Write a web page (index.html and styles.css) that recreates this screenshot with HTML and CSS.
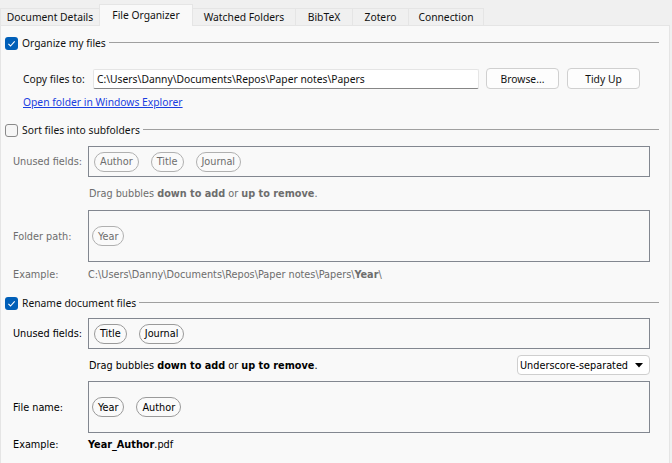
FILE: index.html
```html
<!DOCTYPE html>
<html>
<head>
<meta charset="utf-8">
<link rel="stylesheet" href="styles.css">
</head>
<body>
<div class="tabs">
  <div class="tab t1">Document Details</div>
  <div class="tab t2 active">File Organizer</div>
  <div class="tab t3">Watched Folders</div>
  <div class="tab t4">BibTeX</div>
  <div class="tab t5">Zotero</div>
  <div class="tab t6">Connection</div>
</div>
<div class="panel">
  <div class="group-head">
    <span class="cb checked"><svg width="13" height="13" viewBox="0 0 13 13"><path d="M3.4 6.9 L5.5 9 L9.7 4.3" fill="none" stroke="#fff" stroke-width="1.1"/></svg></span>
    <span class="gh-text">Organize my files</span>
    <span class="rule"></span>
  </div>
  <div class="copy-row">
    <span class="copy-label">Copy files to:</span>
    <div class="input">C:\Users\Danny\Documents\Repos\Paper notes\Papers</div>
    <div class="btn browse">Browse...</div>
    <div class="btn tidy">Tidy Up</div>
  </div>
  <div class="link-row"><a class="link" href="#">Open folder in Windows Explorer</a></div>

  <div class="group-head sort-head">
    <span class="cb"></span>
    <span class="gh-text">Sort files into subfolders</span>
    <span class="rule"></span>
  </div>
  <div class="field-row disabled first">
    <span class="flabel">Unused fields:</span>
    <div class="box short pad5">
      <span class="bubble">Author</span>
      <span class="bubble">Title</span>
      <span class="bubble">Journal</span>
    </div>
  </div>
  <div class="hint disabled">Drag bubbles <b>down to add</b> or <b>up to remove</b>.</div>
  <div class="field-row disabled tall-row">
    <span class="flabel">Folder path:</span>
    <div class="box tall pad3">
      <span class="bubble">Year</span>
    </div>
  </div>
  <div class="example disabled"><span class="flabel">Example:</span><span>C:\Users\Danny\Documents\Repos\Paper notes\Papers\<b>Year</b>\</span></div>

  <div class="group-head rename-head">
    <span class="cb checked"><svg width="13" height="13" viewBox="0 0 13 13"><path d="M3.4 6.9 L5.5 9 L9.7 4.3" fill="none" stroke="#fff" stroke-width="1.1"/></svg></span>
    <span class="gh-text">Rename document files</span>
    <span class="rule"></span>
  </div>
  <div class="field-row rename-unused">
    <span class="flabel">Unused fields:</span>
    <div class="box short pad5">
      <span class="bubble">Title</span>
      <span class="bubble">Journal</span>
    </div>
  </div>
  <div class="drag-row">
    <div class="hint-inline">Drag bubbles <b>down to add</b> or <b>up to remove</b>.</div>
    <div class="combo"><span>Underscore-separated</span><svg width="8" height="5" viewBox="0 0 8 5"><polygon points="0,0 8,0 4,4.5" fill="#000"/></svg></div>
  </div>
  <div class="field-row file-row">
    <span class="flabel">File name:</span>
    <div class="box tall pad3">
      <span class="bubble">Year</span>
      <span class="bubble">Author</span>
    </div>
  </div>
  <div class="example file-example"><span class="flabel">Example:</span><span><b>Year_Author</b>.pdf</span></div>
</div>
</body>
</html>
```

FILE: styles.css
```css
html, body {
  margin: 0;
  padding: 0;
}
body {
  width: 672px;
  height: 463px;
  overflow: hidden;
  background: #f0f0f0;
  font-family: "Noto Sans", "Open Sans", sans-serif;
  font-size: 10.3px;
  color: #000;
}
.tabs {
  display: flex;
  align-items: flex-end;
  height: 25px;
  box-sizing: border-box;
  padding-top: 5px;
  position: relative;
  z-index: 2;
}
.tab {
  height: 17px;
  box-sizing: border-box;
  border: 1px solid #e5e5e5;
  border-bottom: none;
  margin-left: -1px;
  display: flex;
  align-items: center;
  justify-content: center;
  background: #f0f0f0;
  color: #111;
}
.tab.t1 { width: 100px; margin-left: 0; }
.tab.t2 { width: 94px; }
.tab.t3 { width: 104px; }
.tab.t4 { width: 58px; }
.tab.t5 { width: 57px; }
.tab.t6 { width: 76px; }
.tab.active {
  height: 22px;
  margin-bottom: -1px;
  background: #f9f9f9;
  padding-bottom: 2px;
}
.panel {
  width: 670px;
  height: 438px;
  box-sizing: border-box;
  background: #f9f9f9;
  border: 1px solid #e5e5e5;
  border-bottom: none;
  padding-top: 10px;
}
.group-head {
  display: flex;
  align-items: center;
  height: 14px;
  margin-left: 4px;
}
.cb {
  width: 13px;
  height: 13px;
  box-sizing: border-box;
  border: 1px solid #8a8a8a;
  border-radius: 3px;
  background: #f6f6f6;
  flex: none;
  display: flex;
}
.cb.checked {
  border: none;
  background: #005fb8;
}
.gh-text {
  margin-left: 4px;
  color: #111;
}
.rule {
  flex: 1;
  height: 1px;
  background: #a0a0a0;
  margin-left: 3px;
  margin-right: 10px;
  margin-top: -1px;
}
.copy-row {
  display: flex;
  align-items: center;
  margin-top: 18px;
  height: 21px;
}
.copy-label {
  margin-left: 22px;
  width: 70px;
  color: #111;
}
.input {
  width: 386px;
  height: 20px;
  box-sizing: border-box;
  background: #fff;
  border: 1px solid #e5e5e5;
  border-bottom: 1px solid #868686;
  border-radius: 2px;
  padding-left: 3px;
  display: flex;
  align-items: center;
  color: #111;
}
.btn {
  width: 73px;
  height: 21px;
  box-sizing: border-box;
  border: 1px solid #d0d0d0;
  border-radius: 4px;
  background: #fdfdfd;
  display: flex;
  align-items: center;
  justify-content: center;
  color: #111;
}
.browse { margin-left: 7px; }
.tidy { margin-left: 8px; }
.link-row {
  margin-top: 6px;
  margin-left: 22px;
  height: 14px;
  line-height: 14px;
}
.link {
  color: #1a3ee0;
  text-decoration: underline;
}
.sort-head { margin-top: 14px; }
.field-row {
  display: flex;
  align-items: center;
  font-family: "DejaVu Sans Condensed", "DejaVu Sans", sans-serif;
  font-size: 10.8px;
}
.field-row.first { margin-top: 9px; }
.tall-row { margin-top: 9px; }
.flabel {
  margin-left: 12px;
  width: 75px;
  flex: none;
}
.box {
  width: 562px;
  box-sizing: border-box;
  border: 1px solid #828790;
  display: flex;
  align-items: center;
  gap: 12px;
}
.box.short { height: 31px; }
.box.tall { height: 52px; }
.pad5 { padding-left: 5px; }
.pad3 { padding-left: 3px; }
.bubble {
  height: 20px;
  box-sizing: border-box;
  border: 1px solid #9a9a9a;
  border-radius: 10px;
  padding: 0 5px;
  display: flex;
  align-items: center;
  background: #fafafa;
}
.disabled { color: #6d6d6d; }
.disabled .bubble { border-color: #b0b0b0; }
.hint {
  margin-top: 10px;
  padding-left: 88px;
  height: 14px;
  line-height: 14px;
  font-family: "DejaVu Sans Condensed", "DejaVu Sans", sans-serif;
  font-size: 10.8px;
}
.example {
  display: flex;
  margin-top: 6px;
  height: 14px;
  line-height: 14px;
  font-family: "DejaVu Sans Condensed", "DejaVu Sans", sans-serif;
  font-size: 10.8px;
}
.rename-head { margin-top: 14px; }
.rename-unused { margin-top: 8px; }
.drag-row {
  display: flex;
  align-items: center;
  margin-top: 6px;
  height: 20px;
  font-family: "DejaVu Sans Condensed", "DejaVu Sans", sans-serif;
  font-size: 10.8px;
}
.hint-inline { padding-left: 88px; }
.combo {
  margin-left: auto;
  margin-right: 19px;
  width: 133px;
  height: 20px;
  box-sizing: border-box;
  border: 1px solid #cfcfcf;
  border-radius: 4px;
  background: #fff;
  display: flex;
  align-items: center;
  justify-content: space-between;
  padding: 0 6px 0 2px;
}
.file-row { margin-top: 6px; }
.file-example { margin-top: 5px; }
```
